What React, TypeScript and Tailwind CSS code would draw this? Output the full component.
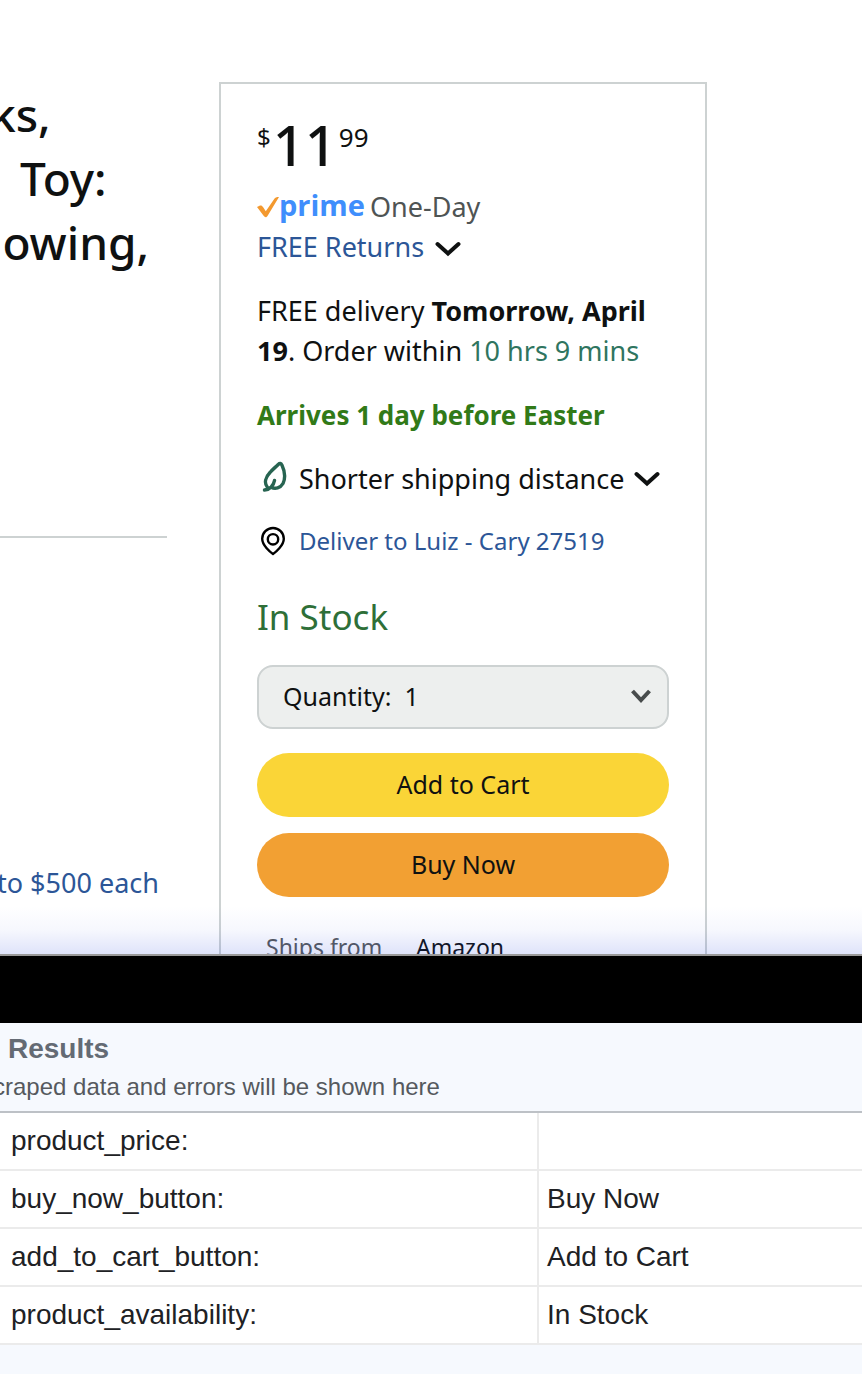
import React from "react";

const results = [
  { name: "product_price:", value: "" },
  { name: "buy_now_button:", value: "Buy Now" },
  { name: "add_to_cart_button:", value: "Add to Cart" },
  { name: "product_availability:", value: "In Stock" },
];

function Chevron({ className }: { className: string }) {
  return (
    <svg viewBox="0 0 26 16" className={className} fill="none" stroke="currentColor" aria-hidden="true">
      <path d="M2.500 3 13 12.500 23.500 3" strokeWidth="4" strokeLinecap="round" />
    </svg>
  );
}

function LeafIcon() {
  return (
    <svg viewBox="0 0 26 32" className="h-8 w-[26px] shrink-0 text-[#276451]" fill="none" stroke="currentColor" strokeWidth="3.400" strokeLinecap="round" strokeLinejoin="round" aria-hidden="true">
      <path d="M2.500 29C5 28.800 7.500 27.800 9.200 26 11 24 12 22.500 12.500 19.500M9.200 26C13 28.500 18.500 27 21 22.500 23.500 17 22.500 9.500 20 4.200 19 2.200 17.800 2 16.200 3.500 13.500 6.200 10.500 8.500 8 11.500 3.500 16.300 1.800 22 5.500 26.500" />
    </svg>
  );
}

function PinIcon() {
  return (
    <svg viewBox="0 0 26 30" className="h-[30px] w-[26px] shrink-0 text-black" fill="none" stroke="currentColor" strokeWidth="2.400" strokeLinejoin="round" aria-hidden="true">
      <path d="M13 28C10.500 26.300 2.200 19.500 2.200 12.800a10.800 10.800 0 0 1 21.600 0C23.800 19.500 15.500 26.300 13 28Z" />
      <circle cx="13" cy="13.300" r="5.200" />
    </svg>
  );
}

function PrimeBadge() {
  return (
    <span className="flex items-center">
      <svg viewBox="0 0 22 22" className="h-[22px] w-[22px]" aria-hidden="true">
        <path d="M0 11 3 9.600C4.300 9.200 5.200 9.800 6 11L8.800 15.200 17.200 3C18.300 1.500 19.300 1 22 1L10.800 19.500C9.500 21.800 8 21.800 6.600 19.800Z" fill="#f3992f" />
      </svg>
      <span className="pb-1 font-['Open_Sans',sans-serif] text-[29px] leading-9 font-bold text-[#3f8efc]">prime</span>
    </span>
  );
}

function BuyBox() {
  return (
    <section className="w-[488px] shrink-0 border-2 border-b-0 border-[#cdd2d2] px-9 pt-8">
      <div className="flex h-[71px] items-start gap-[2px]">
        <span className="pt-[7px] text-[24px] leading-7">$</span>
        <span className="text-[56px] leading-[56px] font-medium">11</span>
        <span className="pt-[7px] text-[26px] leading-7">99</span>
      </div>
      <div className="flex items-center gap-[5px]">
        <PrimeBadge />
        <span className="text-[27px] leading-10 text-[#4f5454]">One-Day</span>
      </div>
      <a href="#returns" className="flex items-center gap-[11px] text-[27px] leading-10 text-[#2c5697]">
        FREE Returns
        <Chevron className="mt-1 h-4 w-[26px] text-[#0f1111]" />
      </a>
      <p className="mt-6 text-[27px] leading-10">
        FREE delivery <b>Tomorrow, April 19</b>. Order within <span className="text-[#2f7560]">10 hrs 9 mins</span>
      </p>
      <p className="mt-6 text-[26px] leading-10 font-bold text-[#317a18]">Arrives 1 day before Easter</p>
      <button type="button" className="mt-6 flex items-center text-[27px] leading-10 whitespace-nowrap">
        <span className="flex w-[42px] pb-1 pl-[5px]"><LeafIcon /></span>
        Shorter shipping distance
        <Chevron className="ml-[9px] h-4 w-[26px]" />
      </button>
      <a href="#location" className="mt-[22px] flex items-center text-[24px] leading-10 text-[#2c5697]">
        <span className="flex w-[42px] pl-[3px]"><PinIcon /></span>
        Deliver to Luiz - Cary 27519
      </a>
      <p className="mt-8 text-[35px] leading-[48px] text-[#2e6f38]">In Stock</p>
      <div className="relative mt-6">
        <select aria-label="Quantity" className="h-16 w-full appearance-none rounded-2xl border-2 border-[#cdd2d2] bg-[#edefee] px-6 text-[25px]">
          <option>Quantity: &nbsp;1</option>
          <option>Quantity: &nbsp;2</option>
        </select>
        <svg viewBox="0 0 22 16" className="pointer-events-none absolute top-6 right-[17px] h-4 w-[22px]" fill="none" stroke="#484c4c" strokeWidth="4" aria-hidden="true">
          <path d="M2.500 2 11 11 19.500 2" />
        </svg>
      </div>
      <button type="button" className="mt-6 h-16 w-full rounded-full bg-[#fad537] text-[25px]">Add to Cart</button>
      <button type="button" className="mt-4 h-16 w-full rounded-full bg-[#f2a033] text-[25px]">Buy Now</button>
      <dl className="mt-[30px] flex h-[27px] overflow-hidden pl-[9px] text-[23px] leading-10">
        <dt className="w-[150px] text-[#565959]">Ships from</dt>
        <dd>Amazon</dd>
      </dl>
    </section>
  );
}

export default function App() {
  return (
    <div className="min-h-screen overflow-hidden bg-[#f6f9fe]">
      <main className="relative flex overflow-hidden bg-white pt-[82px] font-['Noto_Sans',sans-serif] text-[#0f1111]">
        <div className="mr-[52px] w-[167px] shrink-0">
          <h1 className="flex flex-col text-[46px] leading-[64px] font-medium whitespace-nowrap">
            <span className="-ml-[10px]">ks,</span>
            <span className="pl-5">Toy:</span>
            <span className="-ml-[10px]">lowing,</span>
          </h1>
          <hr className="mt-[262px] border-t-2 border-[#cdd2d2]" />
          <a href="#offers" className="-ml-[3px] mt-[325px] block text-[27px] leading-10 whitespace-nowrap text-[#2c5697]">to $500 each</a>
        </div>
        <BuyBox />
        <div className="pointer-events-none absolute inset-x-0 bottom-0 h-12 bg-linear-to-t from-[#2846dc]/15 via-[#2846dc]/4 to-transparent" />
      </main>
      <div className="h-[69px] border-t-2 border-[#999999] bg-black" />
      <section className="font-['Liberation_Sans',Arial,sans-serif] text-[#202124]">
        <header className="border-b-2 border-[#bdc1c6] pt-2 pb-1">
          <h2 className="pl-2 text-[28px] leading-9 font-bold text-[#646b74]">Results</h2>
          <p className="-ml-[19px] text-[24px] leading-10 whitespace-nowrap text-[#55595e]">scraped data and errors will be shown here</p>
        </header>
        <table className="w-full table-fixed border-separate border-spacing-0 bg-white text-[28px] leading-[56px]">
          <tbody>
            {results.map((row) => (
              <tr key={row.name}>
                <th scope="row" className="w-[539px] border-r-2 border-b-2 border-[#ebebeb] py-0 pl-[11px] text-left font-normal">{row.name}</th>
                <td className="border-b-2 border-[#ebebeb] py-0 pl-2">{row.value}</td>
              </tr>
            ))}
          </tbody>
        </table>
      </section>
    </div>
  );
}
